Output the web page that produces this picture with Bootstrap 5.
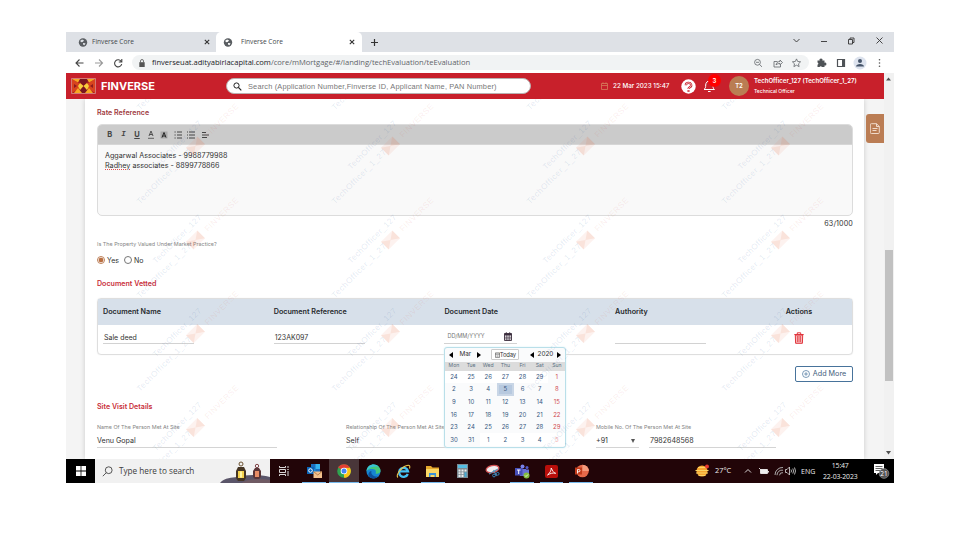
<!DOCTYPE html>
<html lang="en">
<head>
<meta charset="utf-8">
<meta name="viewport" content="width=device-width, initial-scale=1">
<title>Finverse Core</title>
<link href="https://cdn.jsdelivr.net/npm/bootstrap@5.3.0/dist/css/bootstrap.min.css" rel="stylesheet">
<style>
  body { background:#fff; font-family:Inter,"Liberation Sans",sans-serif; font-size:7px; line-height:1; color:#333; overflow:hidden; white-space:nowrap; }
  svg { display:block; flex:none; }
  .desk { width:828px; height:451px; margin:32px 0 0 66px; }
  .sys { font-family:"Open Sans","Noto Sans",sans-serif; }
  /* browser chrome */
  .tabstrip { height:20px; background:#dee1e6; color:#45494d; font-size:6.6px; }
  .tab-item { width:150px; padding:0 6px 0 12px; }
  .tab-live { width:146px; background:#fff; border-radius:5px 5px 0 0; padding:0 7px 0 7px; }
  .addr { height:21px; padding:0 9px; }
  .omni { width:677px; height:15px; border-radius:8px; background:#f1f3f4; margin-left:9px; padding:0 6px 0 7px; font-size:7.6px; color:#5f6368; letter-spacing:-.02px; }
  .omni b { font-weight:400; color:#202124; }
  /* application header */
  .apphead { height:26px; background:#c8202b; color:#fff; padding:0 6px 0 5px; position:relative; z-index:5; }
  .brandname { font-size:11px; font-weight:700; width:125px; margin-left:5px; }
  .searchbox { width:305px; height:16px; border-radius:8px; background:#fff; border:1px solid #b9b1b1; color:#777; font:7.4px "Liberation Sans",Arial,sans-serif; letter-spacing:.17px; padding-left:6px; }
  .stamp { font-size:6.3px; font-weight:500; margin-left:5px; width:76px; }
  .avatar { width:20px; height:20px; background:#ba7d53; font-size:6px; font-weight:600; margin-left:11px; }
  .bellcount { position:absolute; left:3px; top:-6px; width:13px; height:13px; background:#f00; font-size:6px; font-weight:600; }
  .person { margin-left:5px; font-size:6.1px; font-weight:600; gap:4px; padding-top:0; }
  .person small { font-size:5px; font-weight:500; line-height:6px; }
  /* page */
  .stage { background:#f4f4f4; height:360px; padding-left:19px; position:relative; overflow:hidden; }
  .sheet { width:779px; height:360px; background:#fff; padding:0 11px 0 12px; box-shadow:0 0 5px rgba(0,0,0,.17); }
  .sec { font-size:7.1px; font-weight:600; color:#c9303a; }
  .t-rate { height:25px; padding-top:3px; color:#a03b41; }
  .editor { height:92px; border:1px solid #dcdcdc; border-radius:5px; background:#f9f9f9; overflow:hidden; }
  .edbar { height:20px; background:#cbcbcb; padding-left:5px; color:#444; border-bottom:1px solid #d6d6d6; }
  .edbar span { width:13.6px; font-size:7.5px; font-weight:700; }
  .edtext { padding:6px 7px; font-size:7.2px; line-height:10.4px; color:#333; }
  .spell { text-decoration:underline dotted #e05050 1px; text-underline-offset:1px; }
  .count { height:15px; font-size:7.2px; letter-spacing:.1px; }
  .lbl { font-size:5.4px; color:#858585; height:14px; }
  .q { margin-top:7px; }
  .radios { height:16px; font-size:7px; }
  .dot { width:8px; height:8px; border:1px solid #777; border-radius:50%; margin-right:2px; }
  .dot-on { border-color:#bd7f58; background:radial-gradient(#b96f42 0 2px,#fff 2.7px); }
  .t-doc { height:30px; padding-top:2px; }
  .grid-doc { border:1px solid #dedede; border-radius:4px; height:57px; box-shadow:0 0 1px #ddd; }
  .cols { display:grid; grid-template-columns:170.7px 170.7px 170.7px 170.7px 1fr; padding-left:5px; align-items:center; }
  .cols-h { height:26px; background:#d7e0ea; font-size:7.2px; font-weight:600; color:#26292d; }
  .cols-b { height:29px; }
  .fld { border-bottom:1px solid #d2d2d2; height:12px; width:91px; font-size:7px; padding:1px 1px 0; margin-top:-4px; }
  .fld-date { width:73px; font-size:5.6px; color:#777; padding:0 5px 1px 3px; position:relative; }
  .addmore { height:16px; width:58px; border:1px solid #47739b; border-radius:2px; color:#44607d; font-size:7.2px; margin-top:11px; gap:3px; }
  .t-site { margin-top:17px; height:16px; }
  .val { height:13px; border-bottom:1px solid #d4d4d4; font-size:7.1px; }
  .people { margin-top:6px; }
  /* date picker */
  .picker { position:absolute; left:0; top:15px; width:122px; height:101px; background:#fafbfc; border:1px solid #b9dfe9; border-radius:3px; box-shadow:0 0 2px #d4eef5; z-index:3; font-size:6px; color:#375880; overflow:hidden; }
  .picker-top { height:14px; padding:0 4px; color:#333; font-size:6.4px; }
  .todaybtn { border:1px solid #ccc; border-radius:1px; height:11px; width:28px; font-size:5.9px; letter-spacing:-.15px; background:#fff; }
  .wk { display:grid; grid-template-columns:repeat(7,1fr); text-align:center; align-items:center; }
  .wk-h { height:9px; background:#dcdcdc; font-size:5.1px; color:#5b7182; }
  .wk-b { grid-auto-rows:12.6px; }
  .wk-b > * { height:100%; display:flex; align-items:center; justify-content:center; }
  .wk-b .sun { color:#d04a50; }
  .wk-b .off { background:#fff; }
  .wk-b .pick { background:#b7c9df; border:2px solid #c9d6e6; }
  .wk-b .fade5 { color:#f3a9ac; background:#fff; }
  .wmark { position:absolute; left:0; top:0; pointer-events:none; z-index:4; }
  .sidetab { position:absolute; left:800px; top:15px; width:18px; height:29px; background:#bb7d54; border-radius:3px 0 0 3px; z-index:5; }
  .vbar { width:10px; background:#f1f1f1; }
  .vthumb { width:8px; height:131px; background:#c1c1c1; margin-top:166px; }
  /* taskbar */
  .taskbar { height:24px; background:#220508; color:#eee; font-size:7.4px; }
  .startbtn { width:29px; background:#000; }
  .tsearch { width:174.5px; background:#f1f1f1; color:#404040; font-size:8.2px; padding-left:7px; }
  .app { width:29.7px; height:24px; }
  .app::after { content:""; position:absolute; left:3px; right:3px; bottom:0; height:0; background:#76b9ed; }
  .app.run::after { height:1px; }
  .app.now { background:#493639; }
  .app.now::after { left:0; right:0; }
  .tray { width:104px; background:#000; padding-left:11px; }
  .clock { width:44px; text-align:center; font-size:6.9px; line-height:11px; letter-spacing:-.15px; margin-left:3px; }
</style>
</head>
<body>
<main class="desk d-flex flex-column">

  <div class="tabstrip sys d-flex align-items-stretch">
    <div class="tab-item d-flex align-items-center">
      <svg width="10" height="9" viewBox="0 0 10 9"><circle cx="5" cy="4.5" r="4.2" fill="#5a5e62"/><path d="M2 3l2-1.500 2 .8-1 1.500-1.500.5zM5 5l2.500.2-1 2-1.500-.7z" fill="#dee1e6"/></svg>
      <span class="ms-1 ps-0">Finverse Core</span>
      <svg class="ms-auto" width="6" height="6" viewBox="0 0 6 6"><path d="M.8.8l4.400 4.400M5.200.8L.8 5.200" stroke="#333" stroke-width="1.100"/></svg>
    </div>
    <div class="tab-live d-flex align-items-center">
      <svg width="10" height="9" viewBox="0 0 10 9"><circle cx="5" cy="4.5" r="4.2" fill="#5a5e62"/><path d="M2 3l2-1.500 2 .8-1 1.500-1.500.5zM5 5l2.500.2-1 2-1.500-.7z" fill="#fff"/></svg>
      <span class="ms-1 ps-1">Finverse Core</span>
      <svg class="ms-auto" width="6" height="6" viewBox="0 0 6 6"><path d="M.8.8l4.400 4.400M5.200.8L.8 5.200" stroke="#333" stroke-width="1.100"/></svg>
    </div>
    <svg class="align-self-center ms-2" width="9" height="9" viewBox="0 0 9 9"><path d="M4.500 1v7M1 4.500h7" stroke="#333" stroke-width="1.200"/></svg>
    <svg class="ms-auto" width="108" height="20" viewBox="0 0 108 20" fill="none" stroke="#333" stroke-width=".9"><path d="M7.500 7l3 3 3-3M35 9.500h6M62.500 7.500h4v4.500h-4zM64 7V6h4v4.500h-1.500M90.500 5.500l6 6M96.500 5.500l-6 6"/></svg>
  </div>

  <div class="addr sys d-flex align-items-center bg-white">
    <svg width="48" height="10" viewBox="0 0 48 10" fill="none" stroke="#444" stroke-width="1.100"><path d="M8.500 5H1M4.500 1.500L1 5l3.500 3.500"/><path d="M20 5h7.500M24 1.500L27.500 5 24 8.500" stroke="#999"/><path d="M46.300 3.500A3.600 3.600 0 1 0 46.700 6M46.800 1v3h-3"/></svg>
    <div class="omni d-flex align-items-center">
      <svg width="6" height="8" viewBox="0 0 6 8"><path d="M.3 3.200h5.400V8H.3z" fill="#555"/><path d="M1.500 3.500V2a1.500 1.500 0 0 1 3 0v1.500" fill="none" stroke="#555" stroke-width=".8"/></svg>
      <span style="margin-left:7px"><b>finverseuat.adityabirlacapital.com</b>/core/mMortgage/#/landing/techEvaluation/teEvaluation</span>
      <svg class="ms-auto" width="50" height="10" viewBox="0 0 50 10" fill="none" stroke="#5f6368" stroke-width=".8"><circle cx="4.500" cy="4.300" r="2.900"/><path d="M6.600 6.500l2.400 2.400M3 4.300h3M24.500 3.500H21V9h6.500V6.500M23 7c.5-2.500 2-3.500 4-3.500V2l2.500 2.500-2.500 2.300V5.500c-1.500 0-3 .3-4 1.500M43.500.9l1.200 2.600 2.900.3-2.100 2 .6 2.800-2.600-1.400L40.900 8.600l.6-2.800-2.100-2 2.900-.3z"/></svg>
    </div>
    <svg class="ms-auto" width="70" height="14" viewBox="0 0 70 14"><path d="M2.500 4.500h2.200a1.400 1.400 0 1 1 2.600 0h2.200v2.300a1.400 1.400 0 1 1 0 2.600V11H6.900a1.200 1.200 0 0 0-2.300 0H2.500V8.700a1.200 1.200 0 0 0 0-2.300z" fill="#4f5357"/><path d="M22.500 3.500h7v7h-7z" fill="none" stroke="#4f5357" stroke-width="1.200"/><path d="M27 3.500h2.500v7H27z" fill="#4f5357"/><circle cx="45" cy="7" r="6.500" fill="#dde3ee"/><circle cx="45" cy="5" r="2" fill="#46556a"/><path d="M41 10.500c0-3.500 8-3.500 8 0z" fill="#46556a"/><g fill="#555"><circle cx="64.500" cy="3.700" r=".8"/><circle cx="64.500" cy="7" r=".8"/><circle cx="64.500" cy="10.300" r=".8"/></g></svg>
  </div>

  <div class="d-flex flex-grow-1">
    <div style="width:818px">
      <header class="apphead d-flex align-items-center">
        <svg width="25" height="16" viewBox="0 0 25 16"><path d="M.5.5h24v15H.5z" fill="#a51c22" stroke="#e0a09a" stroke-width=".7"/><path d="M1 1l11.500 7L1 15zM24 1l-11.500 7L24 15z" fill="#d8431f"/><path d="M6.500 1L12.500 8 18.500 1zM6.500 15L12.500 8 18.500 15z" fill="#7a1620"/><path d="M1 1l6 3.500L9 1zM16 1l2 3.500L24 1zM3 15l4-5 4 5zM14 15l4-5 4 5z" fill="#f7a823"/><path d="M9 5l3.500 3L9 12 7 8zM16 5l-3.500 3L16 12l2-4z" fill="#f7cf3c"/><path d="M3 6l3 2-3 2zM22 6l-3 2 3 2z" fill="#8c1a1e"/></svg>
        <span class="brandname">FINVERSE</span>
        <div class="searchbox d-flex align-items-center">
          <svg width="9" height="9" viewBox="0 0 9 9" fill="none" stroke="#222"><circle cx="3.500" cy="3.500" r="2.600"/><path d="M5.400 5.400L8.300 8.300" stroke-width="1.200"/></svg>
          <span style="margin-left:6px">Search (Application Number,Finverse ID, Applicant Name, PAN Number)</span>
        </div>
        <svg style="margin-left:70px" width="7" height="8" viewBox="0 0 7 8" fill="none" stroke="#d98a62" stroke-width=".7"><path d="M.5 1.500h6v6h-6zM.5 3.500h6M2 .3v1.500M5 .3v1.500"/></svg>
        <span class="stamp" style="width:68px">22 Mar 2023 15:47</span>
        <svg width="15" height="15" viewBox="0 0 15 15"><circle cx="7.500" cy="7.500" r="7.200" fill="#fff"/><path d="M4.800 6.200a2.700 2.400 0 1 1 4 2.100Q7.500 9 7.500 10M7.500 11.200v1.600" fill="none" stroke="#c8202b" stroke-width="2.200"/><path d="M4.800 6.200a2.700 2.400 0 1 1 4 2.100Q7.500 9 7.500 10" fill="none" stroke="#fff" stroke-width=".7"/></svg>
        <div class="position-relative" style="margin-left:7px">
          <svg width="13" height="14" viewBox="0 0 13 14" fill="none" stroke="#fff" stroke-width="1"><path d="M1 10.500h10.500c-1.500-1.200-1.500-2-1.500-4.500S8 2 6.300 2 2.700 3.500 2.700 6s-.2 3.300-1.700 4.500zM5 12.500h2.600"/></svg>
          <span class="bellcount rounded-circle d-flex align-items-center justify-content-center" style="left:5px;top:-5px">3</span>
        </div>
        <span class="avatar rounded-circle d-flex align-items-center justify-content-center" style="margin-left:13px">T2</span>
        <div class="person d-flex flex-column"><span>TechOfficer_127 (TechOfficer_1_27)</span><small>Technical Officer</small></div>
      </header>

      <div class="stage">
        <section class="sheet">
          <div class="sec t-rate d-flex align-items-center">Rate Reference</div>
          <div class="editor">
            <div class="edbar d-flex align-items-center">
              <span class="text-center">B</span>
              <span class="text-center fst-italic font-monospace">I</span>
              <span class="text-center text-decoration-underline">U</span>
              <span class="d-flex justify-content-center"><svg width="8" height="9" viewBox="0 0 8 9" fill="none" stroke="#444"><path d="M2 6L4 1l2 5M2.700 4.500h2.600" stroke-width=".9"/><path d="M1 8.300h6" stroke-width=".8"/></svg></span>
              <span class="d-flex justify-content-center"><svg width="8" height="8" viewBox="0 0 8 8"><path d="M.5.5h7v7h-7z" fill="#aaa"/><path d="M2 6.500l2-5 2 5M2.700 5h2.600" fill="none" stroke="#222"/></svg></span>
              <span class="d-flex justify-content-center"><svg width="8" height="8" viewBox="0 0 8 8" stroke="#444"><path d="M3 1h5M3 4h5M3 7h5M.5 1h1.200M.5 4h1.200M.5 7h1.200"/></svg></span>
              <span class="d-flex justify-content-center"><svg width="8" height="8" viewBox="0 0 8 8" stroke="#444"><path d="M2 1h6M2 4h6M2 7h6M0 1h1M0 4h1M0 7h1"/></svg></span>
              <span class="d-flex justify-content-center"><svg width="8" height="8" viewBox="0 0 8 8" stroke="#444"><path d="M1 1.500h4M1 4h7M1 6.500h5"/></svg></span>
            </div>
            <div class="edtext">Aggarwal Associates - 9988779988<br><span class="spell">Radhey</span> associates - 8899778866</div>
          </div>
          <div class="count d-flex align-items-center justify-content-end">63/1000</div>
          <div class="lbl q d-flex align-items-center">Is The Property Valued Under Market Practice?</div>
          <div class="radios d-flex align-items-center">
            <span class="dot dot-on"></span><span>Yes</span>
            <span class="dot" style="margin-left:5px"></span><span>No</span>
          </div>
          <div class="sec t-doc d-flex align-items-center">Document Vetted</div>

          <div class="grid-doc">
            <div class="cols cols-h"><span>Document Name</span><span>Document Reference</span><span>Document Date</span><span>Authority</span><span>Actions</span></div>
            <div class="cols cols-b">
              <div class="fld d-flex align-items-center">Sale deed</div>
              <div class="fld d-flex align-items-center">123AK097</div>
              <div class="fld fld-date d-flex align-items-center justify-content-between">
                <span>DD/MM/YYYY</span>
                <svg width="8" height="9" viewBox="0 0 8 9"><path d="M.5 1.500h7v7h-7z" fill="#fff" stroke="#3b2d3d" stroke-width=".9"/><path d="M.5 1.500h7v2h-7z" fill="#3b2d3d"/><path d="M.5 5.200h7M.5 6.900h7M2.800 3v5.500M5.200 3v5.500M2.300 0v2M5.700 0v2" stroke="#3b2d3d" stroke-width=".7"/></svg>
                <div class="picker">
                  <div class="picker-top d-flex align-items-center justify-content-between">
                    <span class="d-flex align-items-center" style="gap:6px"><svg width="4" height="6"><path d="M4 0v6L0 3z"/></svg><span>Mar</span><svg width="4" height="6"><path d="M0 0v6l4-3z"/></svg></span>
                    <span class="todaybtn d-flex align-items-center justify-content-center"><svg width="5" height="6" viewBox="0 0 5 6" fill="none" stroke="#444" stroke-width=".6"><path d="M.4.900h4.200v4.500H.4zM.4 2.200h4.200M1.500 4h2"/></svg>Today</span>
                    <span class="d-flex align-items-center" style="gap:4px"><svg width="4" height="6"><path d="M4 0v6L0 3z"/></svg><span>2020</span><svg width="4" height="6"><path d="M0 0v6l4-3z"/></svg></span>
                  </div>
                  <div class="wk wk-h"><span>Mon</span><span>Tue</span><span>Wed</span><span>Thu</span><span>Fri</span><span>Sat</span><span>Sun</span></div>
                  <div class="wk wk-b">
                    <span class="off">24</span><span class="off">25</span><span class="off">26</span><span class="off">27</span><span class="off">28</span><span class="off">29</span><span class="sun">1</span>
                    <span>2</span><span>3</span><span>4</span><span class="pick">5</span><span>6</span><span>7</span><span class="sun">8</span>
                    <span>9</span><span>10</span><span>11</span><span>12</span><span>13</span><span>14</span><span class="sun">15</span>
                    <span>16</span><span>17</span><span>18</span><span>19</span><span>20</span><span>21</span><span class="sun">22</span>
                    <span>23</span><span>24</span><span>25</span><span>26</span><span>27</span><span>28</span><span class="sun">29</span>
                    <span>30</span><span>31</span><span class="off">1</span><span class="off">2</span><span class="off">3</span><span class="off">4</span><span class="fade5">5</span>
                  </div>
                </div>
              </div>
              <div class="fld"></div>
              <svg style="margin:-4px 0 0 8px" width="10" height="12" viewBox="0 0 10 12" fill="none" stroke="#e0353c"><path d="M.3 2.500h9.400M3.300 2.200V.8h3.400v1.400" stroke-width="1"/><path d="M1.300 3l.3 8.300h6.800L8.700 3z" fill="#f7b9bb"/><path d="M3.500 4v6M5 4v6M6.500 4v6" stroke-width=".7"/></svg>
            </div>
          </div>

          <div class="d-flex justify-content-end">
            <div class="addmore d-flex align-items-center justify-content-center"><svg width="8" height="8" viewBox="0 0 8 8" fill="none" stroke="#47739b" stroke-width=".7"><circle cx="4" cy="4" r="3.500"/><path d="M4 2.200v3.600M2.200 4h3.600"/></svg>Add More</div>
          </div>

          <div class="sec t-site d-flex align-items-center">Site Visit Details</div>
          <div class="people d-flex">
            <div style="width:249px"><div class="lbl d-flex align-items-center">Name Of The Person Met At Site</div><div class="val d-flex align-items-center" style="width:180px">Venu Gopal</div></div>
            <div style="width:250px"><div class="lbl d-flex align-items-center">Relationship Of The Person Met At Site</div><div class="val d-flex align-items-center" style="width:180px">Self</div></div>
            <div><div class="lbl d-flex align-items-center">Mobile No. Of The Person Met At Site</div>
              <div class="d-flex" style="gap:10px">
                <div class="val d-flex align-items-center justify-content-between pe-1" style="width:43px">+91<svg width="4" height="4"><path d="M0 0h4L2 4z" fill="#555"/></svg></div>
                <div class="val d-flex align-items-center" style="width:127px;padding-left:1px">7982648568</div>
              </div></div>
          </div>
        </section>

        <!-- repeated user watermark -->
        <svg class="wmark" width="818" height="360" viewBox="66 99 818 360" font-family="Liberation Sans, Arial, sans-serif" font-size="8.200">
          <defs>
            <g id="stampmark">
              <text transform="translate(351 170) rotate(-45)" fill="#3d66a8" fill-opacity=".15" textLength="65">TechOfficer_127</text>
              <text transform="translate(335 204.500) rotate(-45)" fill="#3d66a8" fill-opacity=".15" textLength="73">TechOfficer_1_27</text>
              <g transform="translate(390.500 146) rotate(-45)" fill-opacity=".1"><path d="M-8-5.500H8v11H-8z" fill="#f08060"/><path d="M-8-5.500L0 0-8 5.500zM8-5.500L0 0l8 5.500z" fill="#e06030"/></g>
              <text transform="translate(403 138) rotate(-45)" fill="#d84048" fill-opacity=".1" textLength="44">FINVERSE</text>
            </g>
            <g id="stamprow"><use href="#stampmark" x="-195"/><use href="#stampmark"/><use href="#stampmark" x="195"/><use href="#stampmark" x="390"/></g>
          </defs>
          <use href="#stamprow" y="-94"/><use href="#stamprow"/><use href="#stamprow" y="94"/><use href="#stamprow" y="187.500"/><use href="#stamprow" y="281.500"/>
        </svg>
        <div class="sidetab d-flex align-items-center justify-content-center"><svg width="10" height="11" viewBox="0 0 10 11" fill="none" stroke="#f6e4d8" stroke-width=".9"><path d="M1.500.7h5L9.300 3.500v6a1 1 0 0 1-1 1h-7a1 1 0 0 1-1-1v-7.800a1 1 0 0 1 1-1zM6.500.7v2.800h2.800M2.500 5.500h5M2.500 7.500h4"/></svg></div>
      </div>
    </div>
    <div class="vbar d-flex flex-column align-items-center">
      <svg class="mt-1" width="6" height="4"><path d="M0 3.500L2.500.5 5 3.500z" fill="#505050"/></svg>
      <div class="vthumb" style="margin-top:169px"></div>
      <svg class="mt-auto mb-1" width="6" height="4"><path d="M0 0h5L2.500 3.500z" fill="#505050"/></svg>
    </div>
  </div>

  <footer class="taskbar sys d-flex align-items-center">
    <div class="startbtn h-100 d-flex align-items-center justify-content-center"><svg width="10" height="10" viewBox="0 0 10 10"><path d="M0 0h4.600v4.600H0zM5.400 0H10v4.600H5.400zM0 5.400h4.600V10H0zM5.400 5.400H10V10H5.400z" fill="#fff"/></svg></div>
    <div class="tsearch h-100 d-flex align-items-center">
      <svg width="11" height="11" viewBox="0 0 11 11" fill="none" stroke="#444" stroke-width=".9"><circle cx="6.700" cy="4.200" r="3.400"/><path d="M4.300 6.700L.8 10.200"/></svg>
      <span style="margin-left:6px">Type here to search</span>
      <svg class="ms-auto" width="50" height="24" viewBox="0 0 50 24"><path d="M0 24c5-6 12-5 17-6 8-2 20-3 33 0v6z" fill="#5a5569"/><path d="M22 24c4-4 18-5 28-3v3z" fill="#6f5a63"/><g><circle cx="21" cy="5" r="2" fill="none" stroke="#6b5130"/><path d="M18 8h6l2 4v7l-2 3h-6l-2-3v-7z" fill="#453524"/><path d="M18 12h6v7h-6z" fill="#f5d24d"/><path d="M20 12.500h2v6h-2z" fill="#fff5a6"/></g><g><circle cx="37" cy="7" r="1.700" fill="none" stroke="#80454a"/><path d="M35 9h4l2 3v6l-2 2h-4l-2-2v-6z" fill="#5a3537"/><path d="M35 12h4v6h-4z" fill="#e88d66"/></g></svg>
    </div>
    <div class="app d-flex align-items-center justify-content-center"><svg width="10" height="10" viewBox="0 0 10 10" fill="none" stroke="#eee" stroke-width=".9"><path d="M.5 0v1.500h6V0M.5 3.500h6v3h-6zM.5 10V8.500h6V10M9 0v2M9 5v5M8.300 3.500h1.400"/></svg></div>
    <div class="app run position-relative d-flex align-items-center justify-content-center"><svg width="17" height="16" viewBox="0 0 17 16"><path d="M5 1h9v10H5z" fill="#1c6ec0"/><path d="M9.500 1H14v5H9.500z" fill="#35b3ee"/><path d="M5 6h4.500v5H5z" fill="#1490df"/><path d="M1 4h7v7H1z" fill="#0a64b8"/><circle cx="4.500" cy="7.500" r="1.800" fill="none" stroke="#fff"/><path d="M7.500 8.500H16V15H7.500z" fill="#f2c28e"/><path d="M7.500 8.500l4.300 3.500L16 8.500" fill="none" stroke="#b06f36" stroke-width=".8"/></svg></div>
    <div class="app run now position-relative d-flex align-items-center justify-content-center"><svg width="14" height="14" viewBox="0 0 14 14"><circle cx="7" cy="7" r="6.800" fill="#2ea44f"/><path d="M7 7L1.100 3.600A6.800 6.800 0 0 1 12.900 3.600z" fill="#e33f32"/><path d="M7 7l5.900-3.400A6.800 6.800 0 0 1 7 13.800z" fill="#fbc716"/><path d="M7 3.700h6L10 8.500 7 7z" fill="#fbc716"/><path d="M1.100 3.600h11.800L12 4H7z" fill="#e33f32"/><circle cx="7" cy="7" r="3.300" fill="#fff"/><circle cx="7" cy="7" r="2.500" fill="#4285f4"/></svg></div>
    <div class="app run position-relative d-flex align-items-center justify-content-center"><svg width="15" height="15" viewBox="0 0 15 15"><circle cx="7.500" cy="7.500" r="7" fill="#1685d2"/><path d="M.6 7C1 2.500 4.500.5 7.500.5c4.500 0 7.200 3.500 7 6.500-.2 2.500-3 3-5 2.500 1-1.500.5-4.500-3-4.500C4 5 1.500 5.500.6 7z" fill="#43c87c"/><path d="M.6 7C1 2.500 4.500.5 7.500.5c2 0 4 .8 5.200 2.200C8 2 3 3 .6 7z" fill="#39c2d7"/><path d="M5.500 7c-1 3 1.500 6 6.500 5.500-3 3-7.500 2-9 0S3 7 5.500 7z" fill="#0c4f9b"/></svg></div>
    <div class="app position-relative d-flex align-items-center justify-content-center"><svg width="15" height="15" viewBox="0 0 15 15" fill="none"><path d="M11.800 10A4.500 4.500 0 1 1 12 7.300H4" stroke="#45c1f3" stroke-width="2.300"/><path d="M2 13.500C-1 12 5 3 11 1.500c3-.8 3.200 1 2.500 3" stroke="#efc84c" stroke-width="1.100"/></svg></div>
    <div class="app run position-relative d-flex align-items-center justify-content-center"><svg width="15" height="13" viewBox="0 0 15 13"><path d="M1 1h5l1.500 1.500H14V12H1z" fill="#e5a82d"/><path d="M1 4h13v8H1z" fill="#fbd865"/><path d="M4 8h7v4H9.500V10h-4v2H4z" fill="#3b92d6"/></svg></div>
    <div class="app position-relative d-flex align-items-center justify-content-center"><svg width="11" height="14" viewBox="0 0 11 14"><path d="M0 0h11v14H0z" fill="#7e8b93"/><path d="M1 1h9v3H1z" fill="#54bde2"/><path d="M1.500 5.500h2v2h-2zM4.500 5.500h2v2h-2zM7.500 5.500h2v2h-2zM1.500 8.300h2v2h-2zM4.500 8.300h2v2h-2zM1.500 11h2v2h-2zM4.500 11h2v2h-2z" fill="#e8edf0"/><path d="M7.500 8.300h2V13h-2z" fill="#46a9d3"/></svg></div>
    <div class="app position-relative d-flex align-items-center justify-content-center"><svg width="15" height="14" viewBox="0 0 15 14"><ellipse cx="7.500" cy="5" rx="6.500" ry="3.500" fill="#f0eded" stroke="#d14e50" stroke-width="1.200" transform="rotate(-12 7.500 5)"/><path d="M4 10l9-5M8.500 6l3 6" stroke="#5b93b8" stroke-width="1.100"/><circle cx="9" cy="11.500" r="1.400" fill="none" stroke="#3484b9"/><circle cx="12.700" cy="9.800" r="1.400" fill="none" stroke="#3484b9"/></svg></div>
    <div class="app run position-relative d-flex align-items-center justify-content-center"><svg width="16" height="15" viewBox="0 0 16 15"><circle cx="8.500" cy="2.500" r="2" fill="#7b83eb"/><circle cx="13" cy="3.500" r="1.500" fill="#5059c9"/><path d="M10 5.500h5v4.500l-3 2zM5 5h7v7H6z" fill="#6870d6"/><path d="M1 4h7.500v7.500H1z" fill="#464eb8"/><path d="M3 6h3.500M4.700 6v4" stroke="#fff"/><circle cx="12.500" cy="11.500" r="3" fill="#83bd3d"/><path d="M11 11.500l1 1 2-2" fill="none" stroke="#fff" stroke-width=".8"/></svg></div>
    <div class="app run position-relative d-flex align-items-center justify-content-center"><svg width="13" height="13" viewBox="0 0 13 13"><rect width="13" height="13" rx="2" fill="#b90f0b"/><path d="M6.200 3c1.500 3 2.500 5 4.500 5.300C8 7.500 5 8.500 2.500 10 4.500 8.500 6.500 5.500 6.200 3z" fill="none" stroke="#fff" stroke-width=".9"/></svg></div>
    <div class="app run position-relative d-flex align-items-center justify-content-center"><svg width="15" height="14" viewBox="0 0 15 14"><circle cx="8.500" cy="7" r="6.300" fill="#e6694a"/><path d="M8.500.7A6.300 6.300 0 0 1 14.800 7H8.500z" fill="#f59b7d"/><path d="M1 3.500h7v7H1z" fill="#c13b1b"/><path d="M3.500 9.500v-4h1.300a1.100 1.100 0 0 1 0 2.300H3.500" fill="none" stroke="#fff" stroke-width=".9"/></svg></div>
    <div class="d-flex align-items-center ms-auto h-100">
      <svg width="15" height="14" viewBox="0 0 15 14"><circle cx="7" cy="7" r="5.500" fill="#f6a52f"/><path d="M3 3.500h8M.5 6.500h13M1 9h12M3.500 11.500h7" stroke="#fbd466" stroke-width="1.200"/><circle cx="12" cy="2.500" r="2" fill="#e5392f"/></svg>
      <span style="margin:0 9px 0 5px;width:20px">27°C</span>
      <svg width="46" height="12" viewBox="0 0 46 12" fill="none" stroke="#eee" stroke-width=".9"><path d="M1 7.500l3-3 3 3"/><path d="M16.500 4.500h7v4h-7zM15 3l2 2M24.500 6v1.500"/><path d="M17 5h6v3h-6z" fill="#eee"/><path d="M31 10a7.500 7.500 0 0 1 8-7.500M33 10.200a5 5 0 0 1 6-5M35.500 10.300a3 3 0 0 1 3.500-2.600" stroke="#bbb"/></svg>
      <div class="tray h-100 d-flex align-items-center" style="padding-left:0">
        <svg style="margin-left:-5px" width="12" height="10" viewBox="0 0 12 10" fill="none" stroke="#ddd" stroke-width=".8"><path d="M.5 3.500h1.500L4.500 1v8L2 6.500H.5zM6 3.500q1 1.500 0 3M7.800 2.500q1.500 2.500 0 5M9.500 1.500q2 3.500 0 7"/></svg>
        <span style="margin-left:4px;font-size:7px">ENG</span>
        <div class="clock">15:47<br>22-03-2023</div>
        <svg class="ms-auto me-1" width="17" height="16" viewBox="0 0 17 16"><path d="M1 1h10v9H5l-2 2v-2H1z" fill="#fff"/><path d="M2.500 3.500h7M2.500 5.500h7M2.500 7.500h5" stroke="#222" stroke-width=".7"/><circle cx="11" cy="10.500" r="4.900" fill="#555" stroke="#aaa" stroke-width=".5"/><text x="11" y="13" font-size="6.500" fill="#fff" text-anchor="middle">21</text></svg>
      </div>
    </div>
  </footer>
</main>
<script src="https://cdn.jsdelivr.net/npm/bootstrap@5.3.0/dist/js/bootstrap.bundle.min.js"></script>
</body>
</html>
